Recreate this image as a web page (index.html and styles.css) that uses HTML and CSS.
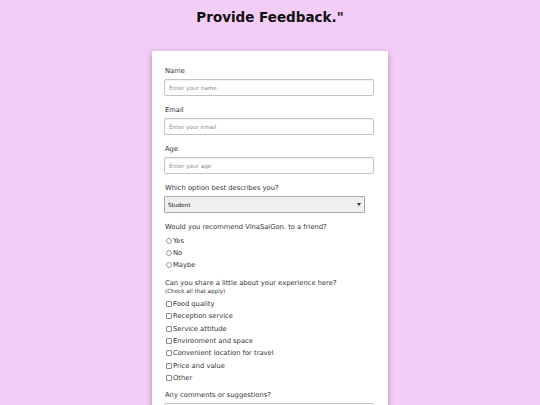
FILE: index.html
```html
<!DOCTYPE html>
<html lang="en">
<head>
<meta charset="utf-8">
<title>Provide Feedback</title>
<link rel="stylesheet" href="styles.css">
</head>
<body>
<h1 class="title">Provide Feedback."</h1>
<form class="card">
  <div class="group">
    <label class="label" for="name">Name</label>
    <input class="field" id="name" type="text" placeholder="Enter your name">
  </div>
  <div class="group">
    <label class="label" for="email">Email</label>
    <input class="field" id="email" type="email" placeholder="Enter your email">
  </div>
  <div class="group">
    <label class="label" for="age">Age</label>
    <input class="field" id="age" type="number" placeholder="Enter your age">
  </div>
  <div class="group">
    <label class="label" for="role">Which option best describes you?</label>
    <div class="select-wrap">
      <select class="select" id="role">
        <option>Student</option>
        <option>Full-time job</option>
        <option>Other</option>
      </select>
    </div>
  </div>
  <div class="group tight">
    <div class="label">Would you recommend VinaSaiGon. to a friend?</div>
    <label class="opt"><input class="radio" type="radio" name="rec">Yes</label>
    <label class="opt"><input class="radio" type="radio" name="rec">No</label>
    <label class="opt"><input class="radio" type="radio" name="rec">Maybe</label>
  </div>
  <div class="group short">
    <div class="label q">Can you share a little about your experience here?</div>
    <div class="hint">(Check all that apply)</div>
    <label class="opt check-row"><input class="check" type="checkbox">Food quality</label>
    <label class="opt check-row"><input class="check" type="checkbox">Reception service</label>
    <label class="opt check-row"><input class="check" type="checkbox">Service attitude</label>
    <label class="opt check-row"><input class="check" type="checkbox">Environment and space</label>
    <label class="opt check-row"><input class="check" type="checkbox">Convenient location for travel</label>
    <label class="opt check-row"><input class="check" type="checkbox">Price and value</label>
    <label class="opt check-row"><input class="check" type="checkbox">Other</label>
  </div>
  <div class="group">
    <label class="label" for="comments">Any comments or suggestions?</label>
    <textarea class="area" id="comments"></textarea>
  </div>
</form>
</body>
</html>
```
FILE: styles.css
```css
html, body {
  margin: 0;
  padding: 0;
}
body {
  background: #f3cdf6;
  font-family: "DejaVu Sans", Verdana, sans-serif;
  color: #333;
  height: 405px;
  overflow: hidden;
}
.title {
  margin: 0;
  padding-top: 8px;
  font-size: 13.5px;
  line-height: 19px;
  font-weight: bold;
  text-align: center;
  color: #111;
}
.card {
  box-sizing: border-box;
  width: 236px;
  margin: 24px auto 0;
  background: #fff;
  padding: 16px 14px 20px 12px;
  box-shadow: 0 2px 6px rgba(0, 0, 0, 0.3);
}
.group {
  display: flex;
  flex-direction: column;
  align-items: flex-start;
  margin-bottom: 10px;
}
.group.tight {
  margin-bottom: 8px;
}
.group.short {
  margin-bottom: 7px;
}
.label {
  display: block;
  font-size: 6.75px;
  line-height: 9px;
  margin-left: 1px;
  margin-bottom: 3px;
}
.label.q {
  line-height: 8px;
  margin-bottom: 0;
}
.hint {
  font-size: 5.6px;
  line-height: 8px;
  margin-left: 1px;
  margin-bottom: 3px;
}
.field {
  box-sizing: border-box;
  display: block;
  width: 210px;
  height: 17px;
  margin: 0;
  padding: 0 4px;
  border: 1px solid #c4c4c4;
  border-radius: 2px;
  box-shadow: inset 0 1px 1px rgba(0, 0, 0, 0.06);
  font-family: "DejaVu Sans", Verdana, sans-serif;
  font-size: 5.7px;
  color: #333;
  -moz-appearance: textfield;
}
.field::placeholder {
  color: #8a8a8a;
}
.field::-webkit-inner-spin-button,
.field::-webkit-outer-spin-button {
  -webkit-appearance: none;
  margin: 0;
}
.select-wrap {
  position: relative;
  width: 201px;
  height: 17px;
}
.select-wrap::after {
  content: "";
  position: absolute;
  right: 4px;
  top: 7px;
  border-left: 2.5px solid transparent;
  border-right: 2.5px solid transparent;
  border-top: 3px solid #333;
  pointer-events: none;
}
.select {
  box-sizing: border-box;
  display: block;
  width: 201px;
  height: 17px;
  margin: 0;
  padding: 0 3px;
  border: 1px solid #a9a9a9;
  border-radius: 1px;
  background: #efefef;
  -webkit-appearance: none;
  appearance: none;
  font-family: "DejaVu Sans", Verdana, sans-serif;
  font-size: 5.7px;
  color: #111;
}
.opt {
  display: flex;
  align-items: center;
  font-size: 6.75px;
  line-height: 12px;
  height: 12px;
}
.check-row {
  height: 12.3px;
}
.radio,
.check {
  -webkit-appearance: none;
  appearance: none;
  box-sizing: border-box;
  width: 6px;
  height: 6px;
  margin: 0 1px 0 2px;
  background: #fff;
}
.radio {
  border: 1px solid #9a9a9a;
  border-radius: 50%;
}
.check {
  border: 1px solid #8a8a8a;
  border-radius: 1px;
}
.area {
  box-sizing: border-box;
  display: block;
  width: 210px;
  height: 40px;
  margin: 0;
  border: 1px solid #c4c4c4;
  border-radius: 2px;
}
```
